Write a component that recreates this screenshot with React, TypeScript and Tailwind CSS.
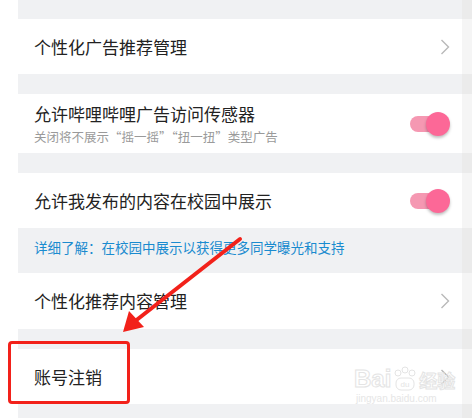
import React from "react";

const font = { fontFamily: '"Noto Sans CJK SC", "Noto Sans", sans-serif' };

function Chevron() {
  return (
    <svg width="10" height="16" viewBox="0 0 10 16" className="shrink-0">
      <polyline points="1.5,1 8.5,8 1.5,15" fill="none" stroke="#b9b9b9" strokeWidth="1.4" />
    </svg>
  );
}

function Toggle() {
  return (
    <div className="relative w-[40px] h-[24px] shrink-0">
      <div className="absolute left-0 top-[4px] w-[32px] h-[16px] rounded-full bg-[#f598b2]" />
      <div className="absolute right-0 top-0 w-[24px] h-[24px] rounded-full bg-[#fc6897] shadow-[0_2px_3px_rgba(0,0,0,0.25)]" />
    </div>
  );
}

function Gap({ h, strip = "#ebebeb" }: { h: string; strip?: string }) {
  return (
    <div className={`flex ${h}`}>
      <div className="flex-1 bg-[#f0f1f3]" />
      <div className="w-[10px]" style={{ background: strip }} />
    </div>
  );
}

function Row({ h, children }: { h: string; children: React.ReactNode }) {
  return (
    <div className={`flex ${h}`}>
      <div className="flex-1 bg-white flex items-center pl-[16px] pr-[12px]">{children}</div>
      <div className="w-[10px] bg-[#f5f5f5]" />
    </div>
  );
}

export default function App() {
  return (
    <div className="relative w-[472px] h-[418px] bg-white flex overflow-hidden" style={font}>
      <div className="w-[18px] shrink-0 bg-white" />
      <div className="flex-1 flex flex-col">
        <Gap h="h-[19px]" />
        <Row h="h-[55px]">
          <span className="flex-1 text-[17px] text-[#222222]">个性化广告推荐管理</span>
          <Chevron />
        </Row>
        <Gap h="h-[20px]" />
        <Row h="h-[59px]">
          <div className="flex-1 flex flex-col">
            <span className="text-[17px] leading-[24px] text-[#222222]">允许哔哩哔哩广告访问传感器</span>
            <span className="text-[12.5px] leading-[18px] mt-[2px] text-[#9a9a9a]">关闭将不展示“摇一摇”“扭一扭”类型广告</span>
          </div>
          <Toggle />
        </Row>
        <Gap h="h-[20px]" />
        <Row h="h-[55px]">
          <span className="flex-1 text-[17px] text-[#222222]">允许我发布的内容在校园中展示</span>
          <Toggle />
        </Row>
        <div className="flex h-[45px]">
          <div className="flex-1 bg-[#f0f1f3] pl-[16px] pt-[6px]">
            <span className="text-[13.5px] leading-[22px] text-[#1a8bcf]">详细了解：在校园中展示以获得更多同学曝光和支持</span>
          </div>
          <div className="w-[10px] bg-[#ebebeb]" />
        </div>
        <Row h="h-[56px]">
          <span className="flex-1 text-[17px] text-[#222222]">个性化推荐内容管理</span>
          <Chevron />
        </Row>
        <Gap h="h-[20px]" />
        <Row h="h-[55px]">
          <span className="flex-1 text-[17px] text-[#222222]">账号注销</span>
          <Chevron />
        </Row>
        <Gap h="h-[14px]" />
      </div>

      {/* watermark */}
      <div className="absolute left-[354px] top-[366px] flex flex-col items-start pointer-events-none">
        <div className="flex items-end">
          <span className="text-[24px] leading-[26px] font-bold text-transparent [-webkit-text-stroke:1px_#e4e4e4]" style={{ fontFamily: '"Liberation Sans", sans-serif' }}>Bai</span>
          <svg width="26" height="26" viewBox="0 0 26 26" className="mx-[1px]">
            <circle cx="6" cy="7" r="3" fill="none" stroke="#e4e4e4" />
            <circle cx="13" cy="4" r="3" fill="none" stroke="#e4e4e4" />
            <circle cx="20" cy="7" r="3" fill="none" stroke="#e4e4e4" />
            <rect x="4" y="12" width="18" height="12" rx="5" fill="none" stroke="#e4e4e4" />
            <text x="13" y="21" textAnchor="middle" fontSize="8" fill="#e4e4e4" fontFamily="Liberation Sans">du</text>
          </svg>
          <span className="text-[18px] leading-[24px] font-bold text-transparent [-webkit-text-stroke:1px_#e4e4e4]">经验</span>
        </div>
        <span className="text-[10px] leading-[14px] text-[#e6e6e6] ml-[2px]" style={{ fontFamily: '"Liberation Sans", sans-serif' }}>jingyan.baidu.com</span>
      </div>

      {/* red box */}
      <div className="absolute left-[8px] top-[341px] w-[122px] h-[63px] border-[3px] border-[#f2211a] rounded-[4px]" />

      {/* arrow */}
      <svg className="absolute left-0 top-0 pointer-events-none" width="472" height="418" viewBox="0 0 472 418">
        <line x1="240" y1="239" x2="134" y2="322" stroke="#f2211a" strokeWidth="4" strokeLinecap="round" />
        <polygon points="123,332 129,311 144,327" fill="#f2211a" />
      </svg>
    </div>
  );
}
